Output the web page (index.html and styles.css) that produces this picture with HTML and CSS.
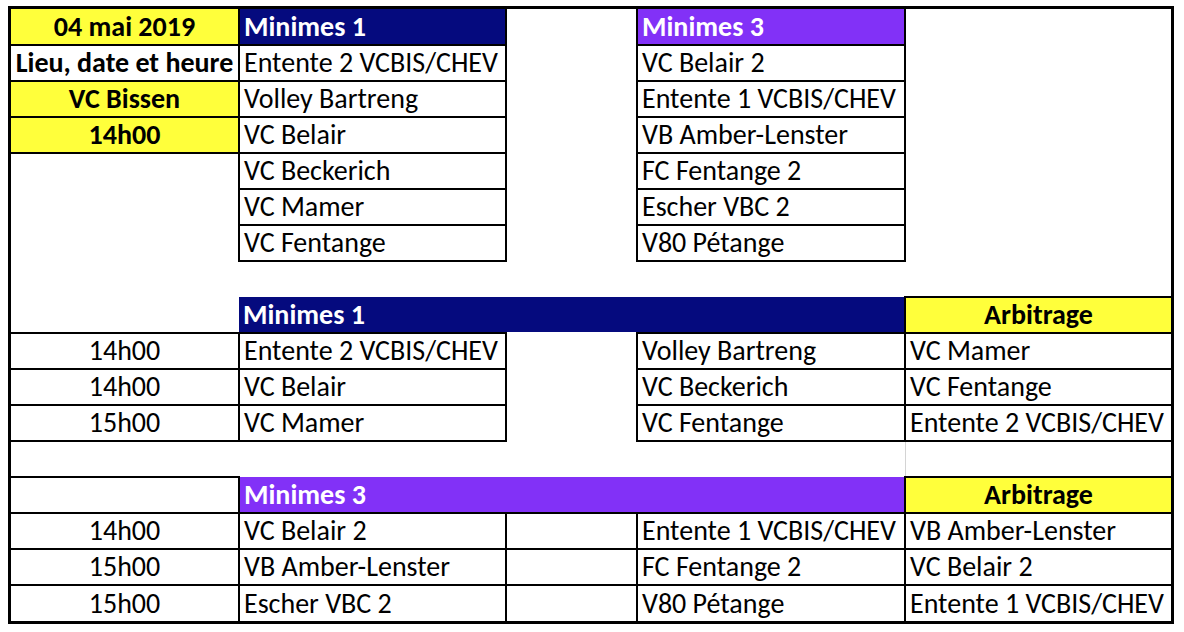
FILE: index.html
```html
<!DOCTYPE html>
<html lang="fr">
<head>
<meta charset="utf-8">
<title>Minimes – 04 mai 2019</title>
<link rel="stylesheet" href="styles.css">
</head>
<body>
<div class="sheet">
<table class="grid">
<colgroup><col class="col-a"><col class="col-b"><col class="col-c"><col class="col-d"><col class="col-e"></colgroup>
<tbody>
<tr><td class="bx nl nt yel bold ctr">04 mai 2019</td><td class="bx nt navy hdr">Minimes 1</td><td></td><td class="bx nt purple hdr">Minimes 3</td><td></td></tr>
<tr><td class="bx nl bold ctr">Lieu, date et heure</td><td class="bx">Entente 2 VCBIS/CHEV</td><td></td><td class="bx">VC Belair 2</td><td></td></tr>
<tr><td class="bx nl yel bold ctr">VC Bissen</td><td class="bx">Volley Bartreng</td><td></td><td class="bx">Entente 1 VCBIS/CHEV</td><td></td></tr>
<tr><td class="bx nl yel bold ctr">14h00</td><td class="bx">VC Belair</td><td></td><td class="bx">VB Amber-Lenster</td><td></td></tr>
<tr><td></td><td class="bx">VC Beckerich</td><td></td><td class="bx">FC Fentange 2</td><td></td></tr>
<tr><td></td><td class="bx">VC Mamer</td><td></td><td class="bx">Escher VBC 2</td><td></td></tr>
<tr><td></td><td class="bx">VC Fentange</td><td></td><td class="bx">V80 Pétange</td><td></td></tr>
<tr><td></td><td></td><td></td><td></td><td></td></tr>
<tr><td class="bb"></td><td colspan="3" class="navy hdr br">Minimes 1</td><td class="bx nr yel bold ctr">Arbitrage</td></tr>
<tr><td class="bx nl ctr">14h00</td><td class="bx">Entente 2 VCBIS/CHEV</td><td></td><td class="bx">Volley Bartreng</td><td class="bx nr">VC Mamer</td></tr>
<tr><td class="bx nl ctr">14h00</td><td class="bx">VC Belair</td><td></td><td class="bx">VC Beckerich</td><td class="bx nr">VC Fentange</td></tr>
<tr><td class="bx nl ctr">15h00</td><td class="bx">VC Mamer</td><td></td><td class="bx">VC Fentange</td><td class="bx nr">Entente 2 VCBIS/CHEV</td></tr>
<tr><td></td><td></td><td></td><td class="grey-r"></td><td></td></tr>
<tr><td class="bx nl"></td><td colspan="3" class="purple hdr br">Minimes 3</td><td class="bx nr yel bold ctr">Arbitrage</td></tr>
<tr><td class="bx nl ctr">14h00</td><td class="bx">VC Belair 2</td><td class="bx"></td><td class="bx">Entente 1 VCBIS/CHEV</td><td class="bx nr">VB Amber-Lenster</td></tr>
<tr><td class="bx nl ctr">15h00</td><td class="bx">VB Amber-Lenster</td><td class="bx"></td><td class="bx">FC Fentange 2</td><td class="bx nr">VC Belair 2</td></tr>
<tr><td class="bx nl nb ctr">15h00</td><td class="bx nb">Escher VBC 2</td><td class="bx nb"></td><td class="bx nb">V80 Pétange</td><td class="bx nr nb">Entente 1 VCBIS/CHEV</td></tr>
</tbody>
</table>
</div>
</body>
</html>
```

FILE: styles.css
```css
html, body {
  margin: 0;
  padding: 0;
  background: #ffffff;
}

body {
  font-family: Carlito, Calibri, Lato, "Liberation Sans", sans-serif;
  color: #000000;
}

.sheet {
  display: inline-block;
  margin: 6px 0 0 8px;
  border: 3px solid #000000;
}

.grid {
  border-collapse: collapse;
  table-layout: fixed;
  width: 1160px;
}

.col-a { width: 228px; }
.col-b { width: 267px; }
.col-c { width: 131px; }
.col-d { width: 268px; }
.col-e { width: 266px; }

.grid tr {
  height: 36px;
}

.grid td {
  padding: 0 4px;
  font-size: 28px;
  line-height: 1;
  white-space: nowrap;
  overflow: hidden;
  vertical-align: middle;
  text-align: left;
}

.grid td.ctr { text-align: center; }

.bx { border: 2px solid #000000; }
.bb { border-bottom: 2px solid #000000; }
.br { border-right: 2px solid #000000; }
.nl { border-left: none; }
.nr { border-right: none; }
.nt { border-top: none; }
.nb { border-bottom: none; }
.grey-r { border-right: 1px solid #d4d4d4; }

.bold { font-weight: 700; }

.yel { background: #ffff3b; }
.navy { background: #050a7e; }
.purple { background: #8231f7; }

.hdr {
  color: #ffffff;
  font-weight: 700;
}
```
